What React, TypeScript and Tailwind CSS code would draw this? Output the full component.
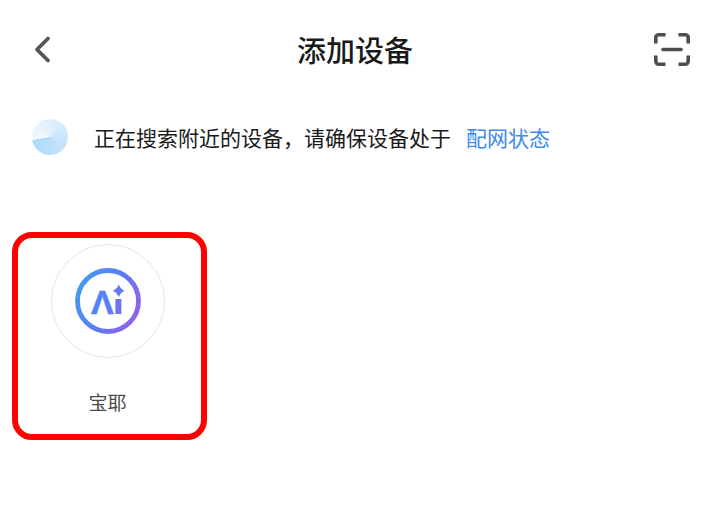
import React from 'react';

const devices = [{ id: 'baoye', name: '宝耶' }];

const BackIcon: React.FC = () => (
  <svg width="36" height="36" viewBox="0 0 36 36" fill="none" stroke="#555555" strokeWidth="3.8" strokeLinecap="round" strokeLinejoin="round" aria-hidden="true">
    <path d="M24 7.5 13 18.5 24 29.5" />
  </svg>
);

const ScanIcon: React.FC = () => (
  <svg width="36" height="36" viewBox="0 0 36 36" fill="none" stroke="#4d4d4d" strokeWidth="3.6" aria-hidden="true">
    <path d="M1.8 12.5V6.7a3 3 0 0 1 3-3H11.5M24.5 3.7H31.2a3 3 0 0 1 3 3V12.5M34.2 24.5V30.3a3 3 0 0 1-3 3H24.5M11.5 33.3H4.8a3 3 0 0 1-3-3V24.5" />
    <path d="M9 18.5H27" strokeLinecap="round" />
  </svg>
);

const AiLogo: React.FC = () => (
  <svg width="66" height="66" viewBox="0 0 66 66" aria-hidden="true">
    <defs>
      <linearGradient id="ai-fill" gradientUnits="userSpaceOnUse" x1="2" y1="18" x2="64" y2="48">
        <stop offset="0" stopColor="#459af2" />
        <stop offset="0.5" stopColor="#5a7cf4" />
        <stop offset="1" stopColor="#9460ea" />
      </linearGradient>
    </defs>
    <circle cx="33" cy="33" r="30.5" fill="none" stroke="url(#ai-fill)" strokeWidth="4.8" />
    <text x="16" y="46" fontSize="34" fontWeight="700" fontFamily="'Liberation Sans', sans-serif" fill="url(#ai-fill)" stroke="url(#ai-fill)" strokeWidth="0.6">Λ</text>
    <rect x="40.4" y="31" width="6" height="15" fill="url(#ai-fill)" />
    <path d="M43.7 16.6Q45.4 21.1 49.7 22.8Q45.4 24.5 43.7 29Q42 24.5 37.7 22.8Q42 21.1 43.7 16.6Z" fill="url(#ai-fill)" />
  </svg>
);

const App: React.FC = () => {
  return (
    <div className="min-h-screen bg-white font-['Noto_Sans_CJK_SC',sans-serif] text-[#1a1a1a]">
      <header className="grid grid-cols-[1fr_auto_1fr] items-center h-[98px] px-5">
        <button type="button" aria-label="返回" className="justify-self-start px-1">
          <BackIcon />
        </button>
        <h1 className="text-[29px] leading-10 font-medium">添加设备</h1>
        <button type="button" aria-label="扫一扫" className="justify-self-end">
          <ScanIcon />
        </button>
      </header>

      <div className="flex items-center h-[78px] px-8">
        <div className="size-9 shrink-0 rounded-full bg-[conic-gradient(from_260deg,#f1f8fe,#e3f1fd_25%,#c5e3fb_60%,#aedafb)]" />
        <p className="ml-[26px] text-[21px] leading-8">
          正在搜索附近的设备，请确保设备处于
          <a href="#pairing" className="ml-[15px] text-[#3d8bea]">配网状态</a>
        </p>
      </div>

      <main className="flex flex-wrap gap-4 px-3 pt-14">
        {devices.map(device => (
          <button
            key={device.id}
            type="button"
            className="flex flex-col items-center w-[195px] rounded-[20px] border-6 border-[#fe0000] pt-1.5 pr-1 pb-4"
          >
            <span className="flex items-center justify-center size-[114px] rounded-full border border-[#e6e6e6]">
              <AiLogo />
            </span>
            <span className="mt-7 text-[19px] leading-8 text-[#4a4a4a]">{device.name}</span>
          </button>
        ))}
      </main>
    </div>
  );
};

export default App;
